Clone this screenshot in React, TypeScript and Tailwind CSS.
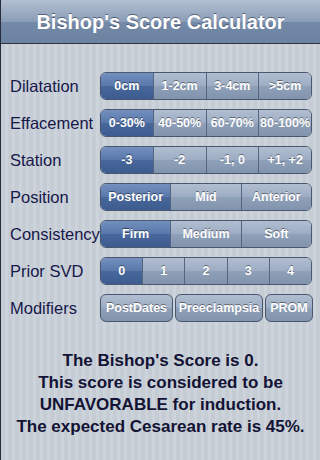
import React, {useState} from 'react';

const rows = [
  {label: 'Dilatation', options: ['0cm', '1-2cm', '3-4cm', '>5cm']},
  {label: 'Effacement', options: ['0-30%', '40-50%', '60-70%', '80-100%']},
  {label: 'Station', options: ['-3', '-2', '-1, 0', '+1, +2']},
  {label: 'Position', options: ['Posterior', 'Mid', 'Anterior']},
  {label: 'Consistency', options: ['Firm', 'Medium', 'Soft']},
  {label: 'Prior SVD', options: ['0', '1', '2', '3', '4']},
];

const selectedBg =
  'bg-[linear-gradient(to_bottom,#7390be_0%,#5877aa_50%,#48689c_51%,#3c5c90_100%)]';
const plainBg =
  'bg-[linear-gradient(to_bottom,#b1bed1_0%,#9dacc3_50%,#8fa0b9_51%,#8293ad_100%)]';

function Segmented({options}: {options: string[]}) {
  const [sel, setSel] = useState(0);
  return (
    <div className="flex h-[28px] w-[212px] overflow-hidden rounded-[6px] border border-[#4a586f]">
      {options.map((opt, i) => (
        <button
          key={opt}
          onClick={() => setSel(i)}
          className={`flex flex-1 items-center justify-center text-[12.5px] font-bold text-white [text-shadow:0_-1px_0_rgba(0,0,0,0.45)] ${
            i > 0 ? 'border-l border-[#56657d]' : ''
          } ${sel === i ? selectedBg : plainBg}`}
        >
          {opt}
        </button>
      ))}
    </div>
  );
}

export default function App() {
  const [mods, setMods] = useState<string[]>([]);

  return (
    <div className="flex h-[460px] w-[320px] flex-col border-l border-[#262d3b] font-['Liberation_Sans',Arial,sans-serif] bg-[repeating-linear-gradient(to_right,#c5ccd4_0px,#c5ccd4_4px,#cdd3da_4px,#cdd3da_7px)]">
      {/* Header */}
      <div className="flex h-[44px] shrink-0 items-center justify-center border-b border-[#2d3642] bg-[linear-gradient(to_bottom,#b3bfd0_0%,#8a9db8_50%,#7389a7_51%,#6b82a1_100%)]">
        <h1 className="text-[20px] font-bold text-white [text-shadow:0_-1px_0_rgba(40,50,70,0.6)]">
          Bishop's Score Calculator
        </h1>
      </div>

      {/* Rows */}
      <div className="flex flex-col gap-[9px] pt-[28px]">
        {rows.map((row) => (
          <div key={row.label} className="flex items-center">
            <span className="w-[99px] pl-[9px] text-[16.5px] text-[#17174a]">
              {row.label}
            </span>
            <Segmented options={row.options} />
          </div>
        ))}

        <div className="flex items-center">
          <span className="w-[99px] pl-[9px] text-[16.5px] text-[#17174a]">
            Modifiers
          </span>
          <div className="flex w-[213px] gap-[2px]">
            {[
              {name: 'PostDates', w: 'w-[73px]'},
              {name: 'Preeclampsia', w: 'w-[88px]'},
              {name: 'PROM', w: 'w-[48px]'},
            ].map((m) => {
              const on = mods.includes(m.name);
              return (
                <button
                  key={m.name}
                  onClick={() =>
                    setMods(on ? mods.filter((x) => x !== m.name) : [...mods, m.name])
                  }
                  className={`flex h-[28px] items-center justify-center rounded-[6px] border border-[#4a586f] text-[12.5px] font-bold text-white [text-shadow:0_-1px_0_rgba(0,0,0,0.45)] ${m.w} ${
                    on ? selectedBg : plainBg
                  }`}
                >
                  {m.name}
                </button>
              );
            })}
          </div>
        </div>
      </div>

      {/* Result */}
      <div className="mt-[28px] text-center text-[17px] font-bold leading-[22px] text-[#131335]">
        <p>The Bishop's Score is 0.</p>
        <p>This score is considered to be</p>
        <p>UNFAVORABLE for induction.</p>
        <p>The expected Cesarean rate is 45%.</p>
      </div>
    </div>
  );
}
